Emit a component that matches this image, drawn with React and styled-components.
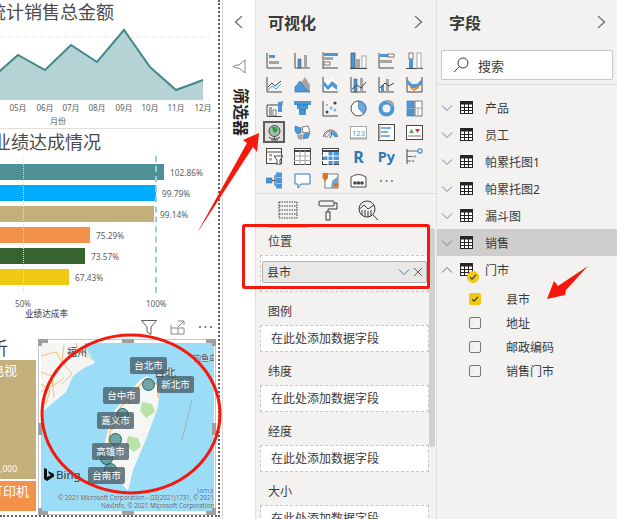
import React from 'react';
import styled, { createGlobalStyle, css } from 'styled-components';

const D = '#484644';
const B = '#4a98d8';
const G = '#a8a6a4';

const GlobalStyle = createGlobalStyle`
  html, body {
    margin: 0;
    padding: 0;
    background: #fff;
    overflow: hidden;
  }
  body {
    font-family: "Noto Sans", "Noto Sans CJK SC", sans-serif;
    color: #252423;
  }
`;

const Page = styled.div`
  position: relative;
  display: flex;
  width: 617px;
  height: 519px;
  overflow: hidden;
  background: #fff;
`;

/* report canvas */
const Canvas = styled.div`
  display: flex;
  flex-direction: column;
  flex: none;
  width: 218px;
  height: 515px;
  overflow: hidden;
  border-right: 2px dotted #605e5c;
  border-bottom: 2px dotted #605e5c;
`;

const VisualTitle = styled.div`
  flex: none;
  height: ${p => p.$h}px;
  line-height: ${p => p.$h}px;
  margin-left: ${p => p.$shift}px;
  font-size: 18px;
  color: #4a4a4a;
  white-space: nowrap;
`;

const LineSvg = styled.svg`
  display: block;
  flex: none;
`;

const Divider = styled.div`
  flex: none;
  height: 1px;
  background: #e1dfdd;
`;

const BarList = styled.div`
  position: relative;
  display: flex;
  flex-direction: column;
  gap: 5px;
  flex: none;
  padding: 9px 0 12px;
`;

const BarRow = styled.div`
  display: flex;
  align-items: center;
  gap: 6px;
  height: 16px;
`;

const Bar = styled.div`
  flex: none;
  height: 16px;
  width: ${p => p.$w}px;
  background: ${p => p.$color};
`;

const BarValue = styled.span`
  font-size: 8.3px;
  color: #605e5c;
`;

const TargetLine = styled.div`
  position: absolute;
  left: ${p => p.$x}px;
  top: 1px;
  bottom: 4px;
  border-left: ${p => (p.$strong ? '2px dashed #9ccfd0' : '1px dotted #e1dfdd')};
`;

const AxisRow = styled.div`
  display: flex;
  gap: 113px;
  flex: none;
  padding-left: 13px;
  height: 12px;
  align-items: center;
`;

const AxisTick = styled.span`
  width: 20px;
  text-align: center;
  font-size: 8px;
  color: #605e5c;
`;

const AxisTitle = styled.div`
  flex: none;
  margin-left: 25px;
  font-size: 8.6px;
  line-height: 10px;
  height: 10px;
  color: #333;
  white-space: nowrap;
`;

const VisualTools = styled.div`
  display: flex;
  justify-content: flex-end;
  align-items: center;
  gap: 13px;
  flex: none;
  height: 16px;
  padding: 0 5px 0 0;
  margin: 0 0 4px;
`;

const BottomRow = styled.div`
  display: flex;
  gap: 2px;
  flex: none;
`;

const TreeColumn = styled.div`
  display: flex;
  flex-direction: column;
  gap: 2px;
  flex: none;
  width: 36px;
  overflow: hidden;
`;

const TreeTile = styled.div`
  position: relative;
  display: flex;
  justify-content: flex-end;
  flex: none;
  box-sizing: border-box;
  height: ${p => p.$h}px;
  background: ${p => p.$color};
  color: #fff;
  font-size: 13px;
  line-height: 20px;
  white-space: nowrap;
  padding-right: ${p => p.$pad}px;
  overflow: hidden;
`;

const TreeValue = styled.span`
  position: absolute;
  right: 19px;
  bottom: 0;
  font-size: 8.5px;
`;

const MapFrame = styled.div`
  position: relative;
  flex: none;
  box-sizing: border-box;
  width: 178px;
  height: 176px;
  padding: 3px 1px 3px 2px;
  border: 1px solid #c8c6c4;
`;

const MapArea = styled.div`
  position: relative;
  width: 173px;
  height: 168px;
  overflow: hidden;
`;

const MapSvg = styled.svg`
  display: block;
`;

const handleSides = {
  tl: css`left: -1px; top: -1px; width: 6px; height: 3px; background: none; border-left: 4px solid #a19f9d; border-top: 4px solid #a19f9d;`,
  tr: css`right: -1px; top: -1px; width: 6px; height: 3px; background: none; border-right: 4px solid #a19f9d; border-top: 4px solid #a19f9d;`,
  bl: css`left: -1px; bottom: -1px; width: 6px; height: 3px; background: none; border-left: 4px solid #a19f9d; border-bottom: 4px solid #a19f9d;`,
  br: css`right: -1px; bottom: -1px; width: 6px; height: 3px; background: none; border-right: 4px solid #a19f9d; border-bottom: 4px solid #a19f9d;`,
  t: css`left: 83px; top: -1px; width: 12px; height: 4px;`,
  b: css`left: 83px; bottom: -1px; width: 12px; height: 4px;`,
  l: css`left: -1px; top: 83px; width: 4px; height: 12px;`,
  r: css`right: -1px; top: 83px; width: 4px; height: 12px;`,
};

const Handle = styled.div`
  position: absolute;
  background: #a19f9d;
  ${p => handleSides[p.$side]}
`;

const PinDot = styled.div`
  position: absolute;
  left: ${p => p.$x - 6}px;
  top: ${p => p.$y - 6}px;
  width: 11px;
  height: 11px;
  border-radius: 50%;
  background: rgba(70, 140, 145, 0.75);
  border: 1px solid #22626a;
`;

const PinLabel = styled.div`
  position: absolute;
  left: ${p => p.$x}px;
  top: ${p => p.$y}px;
  width: 37px;
  height: 17px;
  line-height: 17px;
  border-radius: 2px;
  text-align: center;
  font-size: 9.5px;
  color: #fff;
  background: rgba(72, 92, 102, 0.78);
`;

const MapText = styled.span`
  position: absolute;
  left: ${p => p.$x}px;
  top: ${p => p.$y}px;
  font-size: ${p => p.$size}px;
  line-height: 1;
  color: ${p => p.$color || '#3b3a39'};
  white-space: nowrap;
  text-shadow: 0 0 2px rgba(255, 255, 255, 0.9);
`;

const Attribution = styled.div`
  position: absolute;
  right: 0;
  bottom: 2px;
  text-align: right;
  font-size: 6.2px;
  line-height: 7.5px;
  color: #4f5b63;
  white-space: nowrap;
  text-shadow: 0 0 1px #fff;
`;

const BingMark = styled.div`
  position: absolute;
  left: 3px;
  top: 124px;
  display: flex;
  align-items: center;
  gap: 2px;
  font-size: 11.5px;
  color: #333;
`;

/* filter pane */
const FilterPane = styled.div`
  display: flex;
  flex-direction: column;
  align-items: center;
  flex: none;
  width: 32px;
  margin-left: 2px;
  border-left: 1px solid #d8d6d4;
`;

const FilterHead = styled.div`
  display: flex;
  align-items: center;
  height: 44px;
`;

const FilterIcon = styled.svg`
  margin-top: 15px;
`;

const FilterLabel = styled.div`
  margin: 14px 0 0 4px;
  writing-mode: vertical-rl;
  text-orientation: sideways;
  font-size: 16px;
  font-weight: 700;
  line-height: 20px;
  color: #252423;
`;

/* visualizations pane */
const VizPane = styled.div`
  display: flex;
  flex-direction: column;
  flex: none;
  width: 180px;
  height: 519px;
  background: #f3f2f1;
  border-left: 1px solid #e1dfdd;
  border-right: 1px solid #e1dfdd;
`;

const PaneHead = styled.div`
  display: flex;
  align-items: center;
  justify-content: space-between;
  flex: none;
  height: 44px;
  padding: 0 ${p => p.$right}px 0 ${p => p.$left}px;
  font-size: 16px;
  font-weight: 700;
  color: #3b3a39;
`;

const IconGrid = styled.div`
  display: grid;
  grid-template-columns: repeat(6, 28px);
  grid-auto-rows: 24px;
  flex: none;
  padding: 4px 0 0 4px;
  height: 145px;
  border-bottom: 1px solid #dcdad8;
`;

const IconCell = styled.div`
  display: flex;
  align-items: center;
  justify-content: center;
  ${p => p.$active && css`
    width: 22px;
    height: 22px;
    margin: 1px 3px;
    box-sizing: border-box;
    background: #e1dfdd;
    border: 2px solid #605e5c;
  `}
`;

const Tabs = styled.div`
  display: flex;
  flex: none;
  height: 34px;
  padding-left: 12px;
`;

const Tab = styled.div`
  display: flex;
  align-items: center;
  justify-content: center;
  box-sizing: border-box;
  width: 40px;
  border-bottom: 2px solid ${p => (p.$active ? '#f2c811' : 'transparent')};
`;

const BucketArea = styled.div`
  display: flex;
  flex: 1;
  min-height: 0;
  overflow: hidden;
`;

const BucketList = styled.div`
  flex: none;
  width: 173px;
  padding: 4px 0 0 4px;
  box-sizing: border-box;
`;

const Bucket = styled.div`
  margin-bottom: 10px;
`;

const BucketLabel = styled.div`
  height: 20px;
  line-height: 20px;
  margin-bottom: 3px;
  padding-left: 8px;
  font-size: 12px;
  color: #3b3a39;
`;

const Well = styled.div`
  box-sizing: border-box;
  width: 169px;
  height: ${p => (p.$filled ? 37 : 27)}px;
  padding: ${p => (p.$filled ? '5px 1px' : '0 10px')};
  line-height: 25px;
  font-size: 12px;
  color: #3b3a39;
  background: #fff;
  border: 1px dashed #c8c6c4;
`;

const Chip = styled.div`
  display: flex;
  align-items: center;
  justify-content: space-between;
  box-sizing: border-box;
  height: 22px;
  padding: 0 3px 0 4px;
  background: #e9e8e6;
  border: 1px solid #b3b0ad;
  border-radius: 2px;
`;

const ChipTools = styled.div`
  display: flex;
  align-items: center;
  gap: 3px;
`;

const ScrollTrack = styled.div`
  flex: none;
  width: 6px;
  height: 219px;
  border-radius: 3px;
  background: #d2d0ce;
`;

/* fields pane */
const FieldsPane = styled.div`
  display: flex;
  flex-direction: column;
  flex: 1;
  height: 519px;
  background: #f3f2f1;
`;

const SearchBox = styled.div`
  display: flex;
  align-items: center;
  gap: 9px;
  box-sizing: border-box;
  flex: none;
  height: 30px;
  margin: 6px 4px 4px;
  padding-left: 11px;
  font-size: 13px;
  color: #3b3a39;
  background: #fff;
  border: 1px solid #c8c6c4;
  border-radius: 2px;
`;

const FieldList = styled.div`
  flex: none;
  padding-top: 9px;
  border-top: 1px solid #dcdad8;
`;

const TableRow = styled.div`
  display: flex;
  align-items: center;
  height: 27px;
  padding-left: 4px;
  border-radius: 2px;
  font-size: 12px;
  color: #3b3a39;
  background: ${p => (p.$active ? '#d0cecc' : 'transparent')};
`;

const TableIconWrap = styled.div`
  position: relative;
  display: flex;
  flex: none;
  margin: 0 12px 0 7px;
`;

const UsedBadge = styled.div`
  position: absolute;
  left: 7px;
  top: 8px;
  display: flex;
  align-items: center;
  justify-content: center;
  width: 12px;
  height: 12px;
  border-radius: 50%;
  background: #f2c811;
`;

const ColumnList = styled.div`
  margin-top: 4px;
`;

const ColumnRow = styled.div`
  display: flex;
  align-items: center;
  gap: 25px;
  height: 24px;
  padding-left: 32px;
  font-size: 12px;
  color: #3b3a39;
`;

const Check = styled.div`
  display: flex;
  align-items: center;
  justify-content: center;
  flex: none;
  box-sizing: border-box;
  width: 12px;
  height: 12px;
  border-radius: 2px;
  border: 1px solid ${p => (p.$on ? '#f2c811' : '#7a7876')};
  background: ${p => (p.$on ? '#f2c811' : 'transparent')};
`;

const Annotations = styled.svg`
  position: absolute;
  left: 0;
  top: 0;
  pointer-events: none;
`;

const Chevron = ({ dir = 'right', size = 12, color = '#605e5c' }) => {
  const paths = {
    right: 'M3.5 1 L9 6 L3.5 11',
    left: 'M8.5 1 L3 6 L8.5 11',
    down: 'M1 3.5 L6 8.5 L11 3.5',
    up: 'M1 8.5 L6 3.5 L11 8.5',
  };
  return (
    <svg width={size} height={size} viewBox="0 0 12 12" fill="none">
      <path d={paths[dir]} stroke={color} strokeWidth="1" />
    </svg>
  );
};

const TableGlyph = () => (
  <svg width="13" height="13" viewBox="0 0 13 13">
    <rect x="0.5" y="0.5" width="12" height="12" fill="#fff" stroke="#252423" />
    <rect x="0" y="0" width="13" height="3.5" fill="#252423" />
    <path d="M4.5 3V13M8.5 3V13M0 6.5H13M0 9.5H13" stroke="#252423" />
  </svg>
);

const Tick = () => (
  <svg width="8" height="8" viewBox="0 0 8 8" fill="none">
    <path d="M1 4.2 L3 6.2 L7 1.8" stroke="#3b3a39" strokeWidth="1.2" />
  </svg>
);

const axis = <path d="M1 1V16H16" fill="none" stroke={D} />;

const vizIcons = [
  <>{axis}<rect x="3" y="3" width="6" height="3" fill={B} /><rect x="3" y="9" width="10" height="3" fill={G} /></>,
  <>{axis}<rect x="4" y="7" width="3" height="9" fill={B} stroke={D} strokeWidth=".5" /><rect x="10" y="3" width="3" height="13" fill={G} /></>,
  <><path d="M1 0V17" stroke={G} strokeWidth="2" /><rect x="2" y="1" width="14" height="3" fill={B} /><rect x="2" y="5" width="9" height="3" fill={G} /><rect x="2" y="10" width="6" height="3" fill="#fff" stroke={D} strokeWidth=".7" /><path d="M1 16H16" stroke={D} /></>,
  <><rect x="1" y="1" width="4" height="15" fill={B} stroke={D} strokeWidth=".7" /><rect x="6" y="7" width="4" height="9" fill={G} /><rect x="12" y="4" width="4" height="12" fill="#fff" stroke={G} /><path d="M0 16.5H17" stroke={D} /></>,
  <><path d="M1 1V16H16" fill="none" stroke={D} /><rect x="2" y="2" width="8" height="3" fill={B} /><rect x="10" y="2" width="6" height="3" fill="#fff" stroke={D} strokeWidth=".7" /><rect x="2" y="8" width="12" height="3" fill={G} /></>,
  <><path d="M0 16.5H17" stroke={D} /><rect x="3" y="1" width="4" height="6" fill="#fff" stroke={D} strokeWidth=".7" /><rect x="3" y="7" width="4" height="9" fill={B} /><rect x="11" y="1" width="4" height="15" fill="#fff" stroke={G} /></>,
  <>{axis}<path d="M2 11L6 7L9 10L15 5" fill="none" stroke={D} /><path d="M2 14L6 10L10 13L15 8" fill="none" stroke={B} /></>,
  <><path d="M6 8L11 1L16 9V16H9Z" fill={G} /><path d="M1 16V11L6 5L11 12L16 16Z" fill={B} stroke="#2f78b5" strokeWidth=".7" /></>,
  <>{axis}<path d="M2 2L6 6L10 2L15 7V15H2Z" fill="#fff" /><path d="M2 5L6 10L10 5L15 9V14L10 10L6 14L2 10Z" fill={B} /></>,
  <>{axis}<rect x="4" y="3" width="3" height="13" fill={B} stroke={D} strokeWidth=".5" /><rect x="10" y="2" width="3" height="14" fill={G} /><path d="M2 13L7 9L11 12L16 6" fill="none" stroke={D} /></>,
  <>{axis}<rect x="3" y="9" width="3" height="7" fill={B} /><rect x="8" y="3" width="3" height="13" fill={G} /><path d="M2 12L7 7L11 10L16 7" fill="none" stroke={D} /></>,
  <><path d="M1 1V16H16V1" fill="none" stroke={D} /><path d="M1 3L6 8L11 8L16 3V8L11 12H6L1 8Z" fill={B} /><path d="M4 9L8 13L13 9L13 12L8 15L4 12Z" fill="#e08a2c" /></>,
  <><path d="M1 16V5H16V1" fill="none" stroke={D} /><rect x="3" y="7" width="3" height="9" fill={G} /><rect x="7" y="10" width="3" height="6" fill="#fff" stroke={D} strokeWidth=".7" /><rect x="12" y="2" width="4" height="10" fill={B} /><path d="M1 16.5H16" stroke={D} /></>,
  <><path d="M0 1H17V5H14V9H12V15H5V9H3V5H0Z" fill={B} /><path d="M3 5H14M5 10H12" stroke="#2f78b5" /></>,
  <>{axis}<circle cx="13" cy="3" r="1.6" fill={D} /><circle cx="9" cy="8" r="1.5" fill="#7fb4e0" /><circle cx="13" cy="10" r="1.5" fill="#7fb4e0" /><circle cx="5" cy="5" r="1" fill={G} /><circle cx="5" cy="12" r="1.5" fill={D} /></>,
  <><circle cx="8.5" cy="8.5" r="7.5" fill="#fff" stroke={D} /><path d="M8.5 1A7.5 7.5 0 0 1 16 8.5A7.5 7.5 0 0 1 13.5 14L8.5 8.5Z" fill="#6aaae0" stroke="#2f78b5" strokeWidth=".6" /></>,
  <><circle cx="8.5" cy="8.5" r="6" fill="none" stroke={B} strokeWidth="4" /><path d="M8.5 1A7.5 7.5 0 0 1 15 5" fill="none" stroke={G} strokeWidth="3" /></>,
  <><rect x="1" y="1" width="7" height="7" fill={B} stroke="#2f78b5" strokeWidth=".6" /><rect x="1" y="9" width="7" height="7" fill={B} stroke="#2f78b5" strokeWidth=".6" /><rect x="9" y="1" width="7" height="15" fill="#fff" stroke={D} strokeWidth=".7" /><path d="M9 8H16M12 8V16" stroke={G} /></>,
  <><circle cx="8.5" cy="7" r="5.5" fill="#9fbfa8" stroke={D} /><path d="M6 3L10 3L12 6L9 9L7 7Z" fill="#2f9e4a" /><path d="M3 13A8 8 0 0 0 14 13M8.5 12.5V15M5 16H12" fill="none" stroke={D} /></>,
  <><path d="M1 2L7 4L7 9L3 10L1 7Z" fill={B} stroke="#2f78b5" strokeWidth=".6" /><path d="M8 3L14 2L16 8L9 9Z" fill="#fff" stroke={D} strokeWidth=".7" /><path d="M3 11L9 10L8 16L4 15Z" fill={G} /><path d="M10 10L16 9L14 14L9 15Z" fill={B} stroke="#2f78b5" strokeWidth=".6" /></>,
  <><path d="M1.5 13A7 7 0 0 1 15.5 13" fill="none" stroke={D} strokeWidth=".8" /><path d="M3 13A5.5 5.5 0 0 1 8 7.5V10.5A2.5 2.5 0 0 0 5.5 13Z" fill="#fff" stroke={D} strokeWidth=".6" /><path d="M8.5 7A6 6 0 0 1 15 13H12A3 3 0 0 0 8.5 10Z" fill={B} /><path d="M8 14L10 10" stroke={D} /></>,
  <><rect x="0.5" y="2.5" width="16" height="12" fill="#fff" stroke={G} /><path d="M0 14.5H17" stroke={G} strokeWidth="2" /><text x="8.5" y="11.5" textAnchor="middle" fontSize="7.5" fill="#4a98d8" fontFamily="Noto Sans">123</text></>,
  <><rect x="0.5" y="0.5" width="16" height="16" fill="#fff" stroke={D} /><path d="M3 4H13M3 8H10M3 12H12" stroke={B} strokeWidth="1.6" /><path d="M1.5 2V15" stroke={G} strokeWidth="2" /></>,
  <><rect x="0.5" y="1.5" width="16" height="14" fill="#fff" stroke={D} /><path d="M3 9L5.5 5L8 9Z" fill="#4bab5b" /><path d="M9 5H14L11.5 9Z" fill="#d13438" /><path d="M2 12H15" stroke={G} strokeWidth="1.5" /></>,
  <><rect x="0.5" y="0.5" width="15" height="15" fill="#fff" stroke={D} /><path d="M0 4H16" stroke={D} /><rect x="3" y="6" width="3" height="2.5" fill={G} /><rect x="3" y="10" width="3" height="2.5" fill={G} /><path d="M8 8H17L14 12V17H11V12Z" fill="#fff" stroke={D} /></>,
  <><rect x="0.5" y="0.5" width="16" height="16" fill="#fff" stroke={D} /><path d="M0 3H17" stroke={D} strokeWidth="2" /><path d="M6 3V17M11 3V17M0 8H17M0 12.5H17" stroke={G} /></>,
  <><rect x="0.5" y="0.5" width="16" height="16" fill="#fff" stroke={D} /><path d="M0 3H17" stroke={D} strokeWidth="2" /><rect x="6" y="4" width="11" height="12" fill={B} /><rect x="1" y="8" width="5" height="4" fill={B} /><path d="M6 4V17M11 4V17M0 8H17M0 12.5H17" stroke="#fff" /></>,
  <text x="8.5" y="15" textAnchor="middle" fontSize="16" fontWeight="700" fill="#2f78b5" fontFamily="Noto Sans">R</text>,
  <text x="8.5" y="14" textAnchor="middle" fontSize="14.5" fontWeight="700" fill="#2f78b5" fontFamily="Noto Sans">Py</text>,
  <><path d="M1 1V16" stroke={D} /><path d="M1 3H12M1 8.5H7M1 13H5" stroke={D} strokeWidth=".8" /><circle cx="14" cy="3" r="2" fill="#fff" stroke={B} strokeWidth="1.4" /><circle cx="9" cy="8.5" r="1.3" fill={G} /><circle cx="7" cy="13" r="1.3" fill={G} /></>,
  <><rect x="0" y="6" width="6" height="5" fill={B} stroke="#2f78b5" strokeWidth=".6" /><path d="M6 8.5H9" stroke={D} /><path d="M9 3V14" stroke={D} /><rect x="10" y="0.5" width="6" height="5" fill={B} /><rect x="10" y="6" width="6" height="5" fill={B} /><rect x="10" y="11.5" width="6" height="5" fill={B} /></>,
  <path d="M1 2H16V12H7L4 16V12H1Z" fill="#fff" stroke="#2f78b5" />,
  <><rect x="3" y="2" width="13" height="14" fill="#fff" stroke={D} strokeWidth=".7" /><path d="M3 16L9 16L10 9L16 4V10L12 16" fill="#6aaae0" /><path d="M0.5 1H6V6L3 9.5L0.5 6Z" fill="#d9782a" /><circle cx="14" cy="13" r="2.5" fill="#d9782a" /></>,
  <><path d="M1 5Q8.5 0 16 5V15H1Z" fill="#fff" stroke={D} /><circle cx="5" cy="11" r="1.8" fill={D} /><circle cx="8.5" cy="11" r="1.8" fill={D} /><circle cx="12" cy="11" r="1.8" fill={D} /></>,
  <><circle cx="3" cy="9" r="0.9" fill="#8a5a2c" /><circle cx="8.5" cy="9" r="0.9" fill="#8a5a2c" /><circle cx="14" cy="9" r="0.9" fill="#2f78b5" /></>,
];

const buckets = ['图例', '纬度', '经度', '大小'];

const tables = ['产品', '员工', '帕累托图1', '帕累托图2', '漏斗图', '销售'];
const columns = ['县市', '地址', '邮政编码', '销售门市'];

const bars = [
  { w: 164, color: '#4d9196', value: '102.86%' },
  { w: 156, color: '#00acff', value: '99.79%' },
  { w: 154, color: '#c4b07b', value: '99.14%' },
  { w: 90, color: '#f2914a', value: '75.29%' },
  { w: 85, color: '#356431', value: '73.57%' },
  { w: 69, color: '#f0c914', value: '67.43%' },
];

const months = [
  [-8, '04月'], [18, '05月'], [45, '06月'], [71, '07月'], [97, '08月'],
  [124, '09月'], [150, '10月'], [176, '11月'], [203, '12月'],
];

const linePoints = '-8,78 18,55 45,70 71,45 97,62 124,30 150,67 176,90 203,80';

const pinDots = [[107, 41], [81, 71], [74, 96], [65, 115], [69, 126]];
const pinLabels = [
  [89, 14, '台北市'], [116, 33, '新北市'], [62, 44, '台中市'],
  [56, 69, '嘉义市'], [51, 100, '高雄市'], [47, 124, '台南市'],
];

const SalesLine = () => (
  <LineSvg width="218" height="104" viewBox="0 24 218 104">
    <path d="M0 37H210M0 100H210" stroke="#d8d6d4" strokeDasharray="1 3" />
    <polygon points={`-8,100 ${linePoints} 203,100`} fill="#b5d3d4" />
    <polyline points={linePoints} fill="none" stroke="#43888d" strokeWidth="2" />
    {months.map(([x, m]) => (
      <text key={m} x={x} y="111" textAnchor="middle" fontSize="8" fill="#605e5c">{m}</text>
    ))}
    <text x="58" y="124" textAnchor="middle" fontSize="8" fill="#605e5c">月份</text>
  </LineSvg>
);

const TaiwanMap = () => (
  <MapSvg width="173" height="168" viewBox="41 343 173 168">
    <rect x="41" y="343" width="173" height="168" fill="#9bdcf7" />
    <path d="M41 343H84L88 352L95 363L84 368L73 376L66 392L54 402L41 413Z" fill="#f5f5f3" />
    <path d="M140 380L147 376L153 379L160 387L158 407L147 437L133 470L128 491L122 484L112 470L103 453L107 433L115 410L133 388Z" fill="#f6f6f4" />
    <path d="M142 402L152 404L155 412L146 418L140 411ZM128 436L138 438L141 446L134 452L126 446Z" fill="#b8e3a5" />
    <g fill="none" stroke="#f6bd74" strokeWidth="1">
      <path d="M41 372L52 376L62 362L78 352M76 343L78 352L88 358M41 392L54 385L64 378M52 376L54 398M62 362L72 374M41 356L56 352L62 362M64 345L62 362M41 384L50 390L46 404M72 374L62 384M84 350L92 360" />
      <path d="M147 378L135 390L120 408L110 432L107 455L113 472M147 378L158 385L158 398M135 390L128 400L130 404M120 408L112 430" strokeWidth="1.4" />
    </g>
    <path d="M192 400L182 440M157 511L163 505" stroke="#a8aeb2" strokeWidth="1" />
  </MapSvg>
);

const App = () => (
  <Page>
    <GlobalStyle />
    <Canvas>
      <VisualTitle $h={24} $shift={-12}>统计销售总金额</VisualTitle>
      <SalesLine />
      <Divider />
      <VisualTitle $h={26} $shift={-7}>业绩达成情况</VisualTitle>
      <BarList>
        <TargetLine $x={23} />
        <TargetLine $x={155} $strong />
        {bars.map(b => (
          <BarRow key={b.value}>
            <Bar $w={b.w} $color={b.color} />
            <BarValue>{b.value}</BarValue>
          </BarRow>
        ))}
      </BarList>
      <AxisRow>
        <AxisTick>50%</AxisTick>
        <AxisTick>100%</AxisTick>
      </AxisRow>
      <AxisTitle>业绩达成率</AxisTitle>
      <VisualTools>
        <svg width="16" height="15" viewBox="0 0 16 15" fill="none">
          <path d="M0.5 0.5H15.5L10 7V14.5L6 12V7Z" stroke="#605e5c" />
        </svg>
        <svg width="15" height="15" viewBox="0 0 15 15" fill="none">
          <path d="M8 1H14V5M14 1L8 7M1 5V14H14V8H8V14M1 8H8" stroke="#8a8886" />
        </svg>
        <svg width="15" height="15" viewBox="0 0 15 15">
          <circle cx="2" cy="7" r="1" fill="#605e5c" />
          <circle cx="7.5" cy="7" r="1" fill="#605e5c" />
          <circle cx="13" cy="7" r="1" fill="#605e5c" />
        </svg>
      </VisualTools>
      <BottomRow>
        <TreeColumn>
          <VisualTitle $h={19} $shift={-10}>析</VisualTitle>
          <TreeTile $h={119} $color="#c4b07b" $pad={19}>
            电视
            <TreeValue>4,000</TreeValue>
          </TreeTile>
          <TreeTile $h={30} $color="#f2914a" $pad={7}>打印机</TreeTile>
        </TreeColumn>
        <MapFrame>
          <MapArea>
            <TaiwanMap />
            <MapText $x={26} $y={4} $size={10}>福州</MapText>
            <MapText $x={113} $y={24} $size={11}>台北</MapText>
            <MapText $x={152} $y={11} $size={8}>钓鱼岛</MapText>
            {pinDots.map(([x, y]) => <PinDot key={y} $x={x} $y={y} />)}
            {pinLabels.map(([x, y, name]) => <PinLabel key={name} $x={x} $y={y}>{name}</PinLabel>)}
            <BingMark>
              <svg width="10" height="13" viewBox="0 0 10 13">
                <path d="M0 0L3 1V9L7 7L5 6L4 3L10 6V8.5L3 13L0 11Z" fill="#111" />
              </svg>
              Bing
            </BingMark>
            <MapText $x={156} $y={144} $size={7} $color="#4a78c8">Jama</MapText>
            <Attribution>
              © 2021 Microsoft Corporation - GS(2021)1731, © 2021
              <br />
              NavInfo, © 2021 Microsoft Corporation
            </Attribution>
          </MapArea>
          {Object.keys(handleSides).map(s => <Handle key={s} $side={s} />)}
        </MapFrame>
      </BottomRow>
    </Canvas>

    <FilterPane>
      <FilterHead><Chevron dir="left" size={14} /></FilterHead>
      <FilterIcon width="14" height="15" viewBox="0 0 14 15" fill="none">
        <path d="M13 1V14L7 9H5L1 7.5L5 6H7Z" stroke="#8a8886" />
      </FilterIcon>
      <FilterLabel>筛选器</FilterLabel>
    </FilterPane>

    <VizPane>
      <PaneHead $left={12} $right={11}>
        可视化
        <Chevron size={14} />
      </PaneHead>
      <IconGrid>
        {vizIcons.map((icon, i) => (
          <IconCell key={i} $active={i === 18}>
            <svg width="17" height="17" viewBox="0 0 17 17">{icon}</svg>
          </IconCell>
        ))}
      </IconGrid>
      <Tabs>
        <Tab $active>
          <svg width="20" height="20" viewBox="0 0 20 20" fill="none" stroke="#3b3a39" strokeDasharray="1.5 1">
            <path d="M1 2H19M1 6H19M1 10H19V18H1ZM1 2V10M19 2V10M1 14H19" />
          </svg>
        </Tab>
        <Tab>
          <svg width="20" height="21" viewBox="0 0 20 21" fill="none" stroke="#3b3a39">
            <rect x="1" y="1" width="15" height="5" rx="1" />
            <path d="M16 3H19V9H10V12" />
            <rect x="8" y="12" width="4" height="8" />
          </svg>
        </Tab>
        <Tab>
          <svg width="21" height="21" viewBox="0 0 21 21" fill="none" stroke="#3b3a39">
            <circle cx="9" cy="9" r="8" />
            <path d="M1.5 9L6 5L10 9L16 5M4 10V15M7 10V16M10 11V17M13 10V16M15 15L20 20" />
          </svg>
        </Tab>
      </Tabs>
      <BucketArea>
        <BucketList>
          <Bucket>
            <BucketLabel>位置</BucketLabel>
            <Well $filled>
              <Chip>
                县市
                <ChipTools>
                  <Chevron dir="down" color="#4f7ea8" />
                  <svg width="10" height="10" viewBox="0 0 10 10" fill="none">
                    <path d="M1 1L9 9M9 1L1 9" stroke="#605e5c" />
                  </svg>
                </ChipTools>
              </Chip>
            </Well>
          </Bucket>
          {buckets.map(b => (
            <Bucket key={b}>
              <BucketLabel>{b}</BucketLabel>
              <Well>在此处添加数据字段</Well>
            </Bucket>
          ))}
        </BucketList>
        <ScrollTrack />
      </BucketArea>
    </VizPane>

    <FieldsPane>
      <PaneHead $left={12} $right={9}>
        字段
        <Chevron size={14} />
      </PaneHead>
      <SearchBox>
        <svg width="16" height="16" viewBox="0 0 16 16" fill="none">
          <circle cx="10" cy="6" r="5" stroke="#3b3a39" />
          <path d="M6.5 9.5L1 15" stroke="#3b3a39" />
        </svg>
        搜索
      </SearchBox>
      <FieldList>
        {tables.map(t => (
          <TableRow key={t} $active={t === '销售'}>
            <Chevron dir="down" color="#6b87a3" />
            <TableIconWrap><TableGlyph /></TableIconWrap>
            {t}
          </TableRow>
        ))}
        <TableRow>
          <Chevron dir="up" color="#6b6a78" />
          <TableIconWrap>
            <TableGlyph />
            <UsedBadge><Tick /></UsedBadge>
          </TableIconWrap>
          门市
        </TableRow>
        <ColumnList>
          {columns.map((c, i) => (
            <ColumnRow key={c}>
              <Check $on={i === 0}>{i === 0 && <Tick />}</Check>
              {c}
            </ColumnRow>
          ))}
        </ColumnList>
      </FieldList>
    </FieldsPane>

    <Annotations width="617" height="519" viewBox="0 0 617 519" fill="none">
      <ellipse cx="131" cy="414" rx="89" ry="79" stroke="#f5180c" strokeWidth="3" />
      <rect x="243.5" y="225.5" width="185" height="62" rx="1" stroke="#f5180c" strokeWidth="3" />
      <polygon points="197,233 247,143 243,140 259,133 257,152 253,147" fill="#f5180c" />
      <polygon points="547,299 554,281 558,286 588,266 566,290 565,295" fill="#f5180c" />
    </Annotations>
  </Page>
);

export default App;
